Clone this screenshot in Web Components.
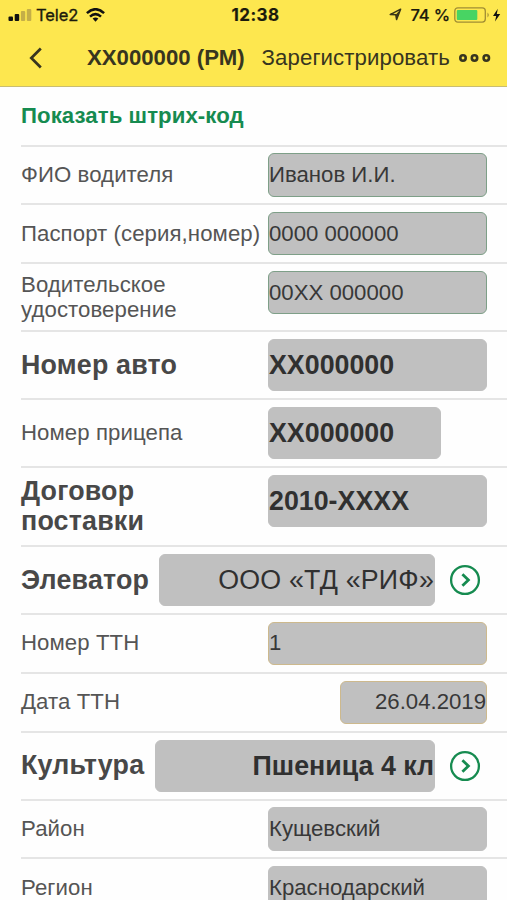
<!DOCTYPE html>
<html lang="ru">
<head>
<meta charset="utf-8">
<title>ХХ000000 (РМ)</title>
<style>
html,body{margin:0;padding:0}
body{width:507px;height:900px;overflow:hidden;background:#fefefe;font-family:"Liberation Sans",Arial,sans-serif}
</style>
</head>
<body>
<driver-app></driver-app>
<script>
const define = (name, html) => {
  const t = document.createElement('template');
  t.innerHTML = html;
  customElements.define(name, class extends HTMLElement {
    constructor() {
      super();
      this.attachShadow({mode: 'open'}).append(t.content.cloneNode(true));
    }
  });
};

define('status-bar', `
<style>
:host{display:grid;grid-template-columns:1fr auto 1fr;align-items:center;height:29px;padding:0 6px 0 8px;box-sizing:border-box;color:#1b1a0c;font-size:17px;line-height:20px;-webkit-text-stroke:.35px}
div{display:flex;align-items:center}
.r{justify-content:flex-end}
svg{display:block;flex:none}
.time{font-weight:700;font-size:17px;letter-spacing:.4px;padding-left:2px;-webkit-text-stroke:.2px;font-family:Inter,"Liberation Sans",sans-serif}
.c{font-family:Inter,"Liberation Sans",sans-serif;font-size:16.5px;margin:0 8px 0 4px;letter-spacing:-.1px}
.p{font-family:Inter,"Liberation Sans",sans-serif;font-size:16.5px;margin:0 4px 0 9px;font-weight:500;-webkit-text-stroke:.2px;letter-spacing:-.15px;white-space:nowrap}
</style>
<div><svg width="24" height="14" viewBox="0 0 24 14"><rect x=".5" y="8.500" width="4.5" height="4.500" rx="1" fill="#111"/><rect x="6.7" y="6" width="4.5" height="7" rx="1" fill="#111"/><rect x="12.9" y="3" width="4.3" height="10" rx="1" fill="#c4ae48"/><rect x="18.8" y="1" width="4.5" height="12" rx="1" fill="#c4ae48"/></svg><span class="c">Tele2</span>
<svg width="19" height="14" viewBox="0 0 19 14" fill="none" stroke="#111" stroke-width="2.5"><path d="M.9 5.2Q9.5-2.8 18.1 5.2"/><path d="M4 8.6Q9.500 3.600 15 8.600"/><path d="M6.600 10.600Q9.500 8.200 12.400 10.600L9.500 13.800Z" fill="#111" stroke="none"/></svg></div>
<span class="time">12:38</span>
<div class="r"><svg width="13" height="13" viewBox="0 0 13 13"><path d="M1.200 6.600L11.600 1.200 7.600 11.600 6.800 6.800Z" fill="none" stroke="#3b3717" stroke-width="1.500" stroke-linejoin="round"/><path d="M11.600 1.200L7.600 11.600 6.800 6.800Z" fill="#3b3717"/></svg><span class="p">74 %</span>
<svg width="36" height="16" viewBox="0 0 36 16"><rect x=".8" y=".9" width="30.500" height="14.200" rx="3" fill="none" stroke="#a08d34" stroke-width="1.300"/><rect x="2.800" y="3" width="20.500" height="10" rx="1" fill="#48d463"/><path d="M33.500 5.500Q36 8 33.500 10.500Z" fill="#a08d34"/></svg>
<svg width="9" height="14" viewBox="0 0 9 14" style="margin-left:2px"><path d="M5.800.8L1 8H4.200L3 13.400 8.200 6H4.800Z" fill="#111"/></svg></div>`);

define('nav-bar', `
<style>
:host{display:flex;align-items:center;height:57px;padding:0 16px 0 28px;color:#37351f;font-size:22.200px;line-height:26px;white-space:nowrap}
svg{display:block;flex:none}
.t{margin-left:42px;font-weight:700}
.a{margin-left:17px;letter-spacing:.1px}
.m{margin-left:auto}
</style>
<svg width="17" height="24" viewBox="0 0 17 24"><path d="M12.800 2.500L3.300 12 12.800 21.500" fill="none" stroke="#37351f" stroke-width="2.700"/></svg>
<span class="t"><slot name="title"></slot></span><span class="a"><slot name="action"></slot></span>
<svg class="m" width="33" height="10" viewBox="0 0 33 10" fill="none" stroke="#37351f" stroke-width="2.600"><circle cx="5" cy="5" r="2.700"/><circle cx="16.500" cy="5" r="2.700"/><circle cx="28.300" cy="5" r="2.700"/></svg>`);

define('go-button', `
<style>:host{display:block;width:32px;height:32px;flex:none;margin:0 6px 0 14px}svg{display:block}</style>
<svg width="32" height="32" viewBox="0 0 32 32" fill="none" stroke="#168b50"><circle cx="16" cy="16" r="13.900" stroke-width="2.300"/><path d="M13.400 10.200L19.400 16 13.400 21.800" stroke-width="2.800"/></svg>`);

define('value-box', `
<style>
:host{display:flex;align-items:center;flex:none;box-sizing:border-box;width:var(--w,219px);height:43.500px;border:1.200px solid var(--edge,#c0c0c0);border-radius:6px;background:#c0c0c0;color:#383838;font-size:22.200px;line-height:26px;white-space:nowrap}
:host([edge=green]){--edge:#7e9f88}
:host([edge=gold]){--edge:#cdb98d}
:host([big]){height:52px;font-size:26.800px;line-height:30px;color:#303030}
:host([strong]){font-weight:700}
:host([end]){justify-content:flex-end}
</style><slot></slot>`);

define('form-row', `
<style>
:host{display:flex;align-items:center;box-sizing:border-box;height:58.800px;margin-left:21px;padding-right:20px;border-bottom:2px solid #e5e5e5;color:#555;font-size:22.200px;line-height:25px}
:host([big]){height:68px}
:host([tall]){height:79px}
:host([strong]) .l{font-weight:700;font-size:26.800px;line-height:30px;color:#484848;letter-spacing:.2px}
.l{flex:1;white-space:nowrap;letter-spacing:.08px;padding-bottom:1px}
</style>
<span class="l"><slot name="label"></slot></span><slot></slot>`);

define('driver-app', `
<style>
:host{display:block;width:507px;height:900px;overflow:hidden}
header{background:#fde74f;height:86px;border-bottom:1px solid #c9bd72}
main{display:block}
.link{display:flex;align-items:center;height:59.500px;box-sizing:border-box;margin-left:21px;border-bottom:2px solid #e5e5e5;color:#168b50;font-size:22.200px;font-weight:700;letter-spacing:.07px}
</style>
<header><status-bar></status-bar><nav-bar><span slot="title">XX000000 (РМ)</span><span slot="action">Зарегистрировать</span></nav-bar></header>
<main>
<div class="link"><span>Показать штрих-код</span></div>
<form-row><span slot="label">ФИО водителя</span><value-box edge="green">Иванов И.И.</value-box></form-row>
<form-row><span slot="label">Паспорт (серия,номер)</span><value-box edge="green">0000 000000</value-box></form-row>
<form-row big><span slot="label">Водительское<br>удостоверение</span><value-box edge="green" style="margin-bottom:9px">00ХХ 000000</value-box></form-row>
<form-row big strong><span slot="label">Номер авто</span><value-box big strong>ХХ000000</value-box></form-row>
<form-row big><span slot="label">Номер прицепа</span><value-box big strong style="--w:173px;margin-right:46px">ХХ000000</value-box></form-row>
<form-row tall strong><span slot="label">Договор<br>поставки</span><value-box big strong style="margin-bottom:11px">2010-ХХХХ</value-box></form-row>
<form-row big strong><span slot="label">Элеватор</span><value-box big end style="--w:276px;letter-spacing:.2px">ООО «ТД «РИФ»</value-box><go-button></go-button></form-row>
<form-row><span slot="label">Номер ТТН</span><value-box edge="gold">1</value-box></form-row>
<form-row><span slot="label">Дата ТТН</span><value-box edge="gold" end style="--w:147px">26.04.2019</value-box></form-row>
<form-row big strong><span slot="label">Культура</span><value-box big strong end style="--w:280px">Пшеница 4 кл</value-box><go-button></go-button></form-row>
<form-row><span slot="label">Район</span><value-box>Кущевский</value-box></form-row>
<form-row><span slot="label">Регион</span><value-box>Краснодарский</value-box></form-row>
</main>`);
</script>
</body>
</html>
